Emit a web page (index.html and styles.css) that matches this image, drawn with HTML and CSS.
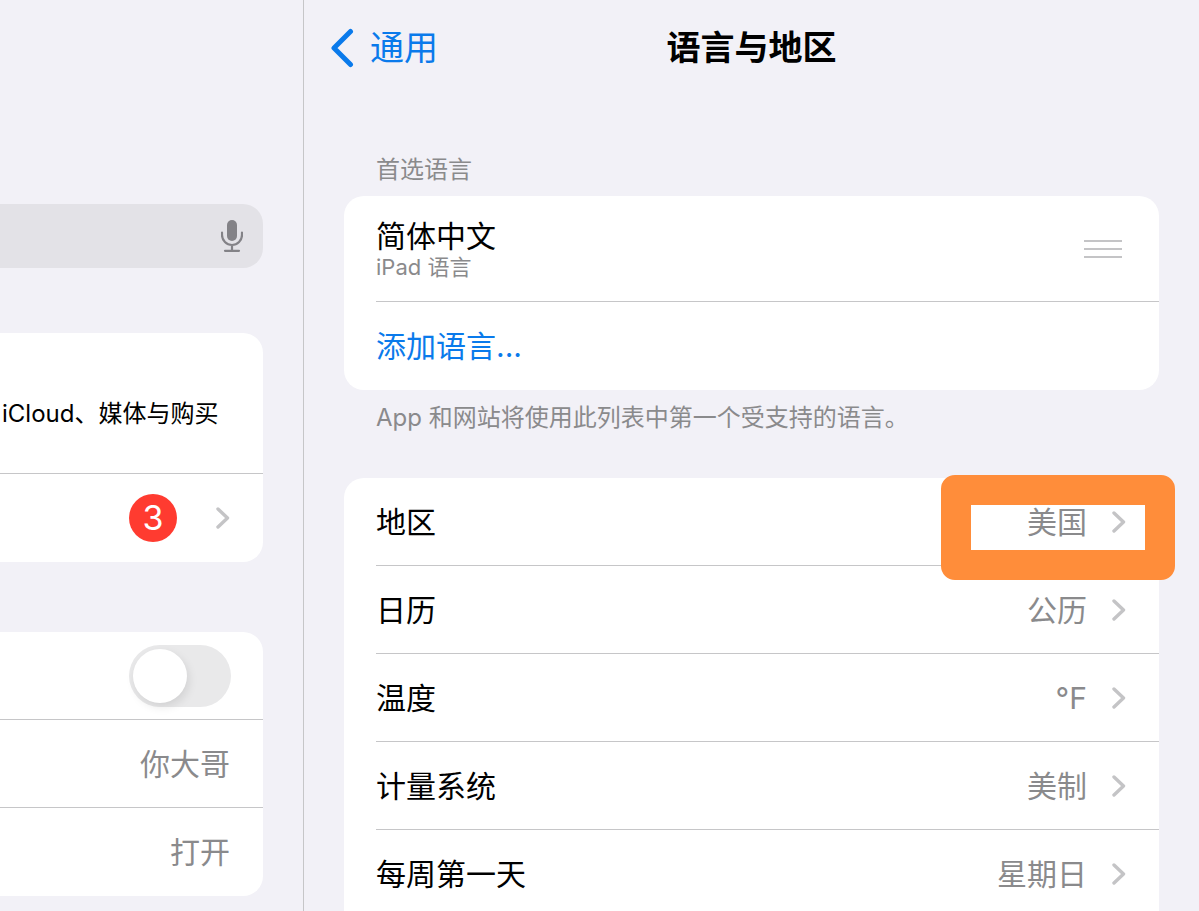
FILE: index.html
```html
<!DOCTYPE html>
<html lang="zh-CN">
<head>
  <meta charset="utf-8" />
  <meta name="viewport" content="width=device-width,initial-scale=1" />
  <title>语言与地区</title>
  <link rel="stylesheet" href="styles.css">
</head>

<body>
  <svg width="0" height="0" class="defs" aria-hidden="true">
    <symbol id="chevron" viewBox="0 0 14 22">
      <path d="M2 2 L11.500 11 L2 20" fill="none" stroke="currentColor" stroke-width="3.400" stroke-linecap="round" stroke-linejoin="round"/>
    </symbol>
  </svg>

  <aside>
    <div class="search">
      <input type="search" aria-label="搜索">
      <button class="mic" aria-label="听写">
        <svg width="22" height="32" viewBox="0 0 22 32">
          <rect x="6" y="0" width="10" height="21" rx="5" fill="currentColor"/>
          <path d="M1 12.500v2.500a10 10 0 0 0 20 0V12.500M11 25v5M4 30.800h14" fill="none" stroke="currentColor" stroke-width="2.200" stroke-linecap="round"/>
        </svg>
      </button>
    </div>

    <div class="side-card">
      <a href="#account" class="side-row account">iCloud、媒体与购买</a>
      <a href="#updates" class="side-row">
        <span class="badge">3</span>
        <svg class="chevron"><use href="#chevron"/></svg>
      </a>
    </div>

    <div class="side-card">
      <div class="side-row"><input type="checkbox" class="switch" aria-label="飞行模式"></div>
      <a href="#wifi" class="side-row">你大哥</a>
      <a href="#bluetooth" class="side-row">打开</a>
    </div>
  </aside>

  <main>
    <header>
      <a href="#general" class="back">
        <svg width="24" height="40" viewBox="0 0 24 40">
          <path d="M20.500 3.500 L4 20 L20.500 36.500" fill="none" stroke="currentColor" stroke-width="5" stroke-linecap="round" stroke-linejoin="round"/>
        </svg>
        通用
      </a>
      <h1>语言与地区</h1>
    </header>

    <section>
      <h2>首选语言</h2>
      <div class="card">
        <div class="row language">
          <div class="label">
            <div class="name">简体中文</div>
            <div class="sub">iPad 语言</div>
          </div>
          <button class="grip" aria-label="重新排序"><i></i><i></i><i></i></button>
        </div>
        <button class="row add">添加语言...</button>
      </div>
      <p class="note">App 和网站将使用此列表中第一个受支持的语言。</p>
    </section>

    <section>
      <div class="card options">
        <a href="#region" class="row">
          地区 <span class="value">美国</span>
          <svg class="chevron"><use href="#chevron"/></svg>
        </a>
        <a href="#calendar" class="row">
          日历 <span class="value">公历</span>
          <svg class="chevron"><use href="#chevron"/></svg>
        </a>
        <a href="#temperature" class="row">
          温度 <span class="value">°F</span>
          <svg class="chevron"><use href="#chevron"/></svg>
        </a>
        <a href="#units" class="row">
          计量系统 <span class="value">美制</span>
          <svg class="chevron"><use href="#chevron"/></svg>
        </a>
        <a href="#weekday" class="row">
          每周第一天 <span class="value">星期日</span>
          <svg class="chevron"><use href="#chevron"/></svg>
        </a>
        <div class="marker"></div>
      </div>
    </section>
  </main>
</body>
</html>
```
FILE: styles.css
```css
:root{
  --bg:#f2f1f7;
  --card:#ffffff;
  --line:#c6c6c8;
  --text:#000000;
  --muted:#8a8a8c;
  --accent:#0a7aeb;
  --chevron:#c4c4c6;
  --radius:20px;
  --row:88px;
}

*{ box-sizing:border-box; }

body{
  margin:0; display:flex; height:100vh; overflow:hidden;
  font-family:Inter,"Noto Sans CJK SC",sans-serif;
  font-size:30px; line-height:40px;
  background:var(--bg); color:var(--text);
}

a{ color:inherit; text-decoration:none; }
button{ padding:0; border:0; background:none; font:inherit; color:inherit; cursor:pointer; }
svg{ display:block; flex:none; }
.defs{ position:absolute; }
.chevron{ width:14px; height:22px; color:var(--chevron); }

/* sidebar */
aside{
  flex:none; width:304px; padding:204px 40px 0 0;
  border-right:1px solid var(--line);
}

.search{
  display:flex; align-items:center; height:64px; padding-right:20px;
  background:#e3e2e7; border-radius:0 var(--radius) var(--radius) 0;
}
.search input{
  flex:1; min-width:0; height:100%; border:0; outline:0;
  background:none; font:inherit; appearance:none;
}
.mic{ color:#838287; }

.side-card{
  margin-top:65px; overflow:hidden;
  background:var(--card); border-radius:0 var(--radius) var(--radius) 0;
}
.side-card + .side-card{ margin-top:70px; }
.side-row{
  display:flex; align-items:center; justify-content:flex-end;
  height:var(--row); padding-right:33px;
  color:var(--muted); border-bottom:1px solid var(--line);
}
.side-row:has(.switch){ padding-right:32px; }
.side-row:last-child{ border-bottom:0; }
.side-row.account{
  justify-content:flex-start; height:141px; padding:22px 0 0 2px;
  font-size:24px; color:var(--text); white-space:nowrap;
}

.badge{
  width:48px; height:48px; margin-right:39px; border-radius:50%;
  background:#ff3b30; color:#fff; font-size:34px; line-height:48px; text-align:center;
}

.switch{
  appearance:none; display:flex; align-items:center;
  width:102px; height:62px; margin:0; padding:4px;
  background:#e9e9ea; border-radius:31px; cursor:pointer;
}
.switch::before{
  content:""; width:54px; height:54px; border-radius:50%;
  background:#fff; box-shadow:2px 4px 10px rgba(0,0,0,0.1);
}
.switch:checked{ justify-content:flex-end; background:#34c759; }

/* detail pane */
main{ flex:1; min-width:0; padding:0 40px; overflow-y:auto; scrollbar-width:none; }

header{
  display:grid; grid-template-columns:1fr auto 1fr; align-items:center;
  height:96px; margin:0 -14px; font-size:34px;
}
.back{ display:flex; align-items:center; gap:16px; color:var(--accent); }
h1{ margin:0; font-size:34px; font-weight:600; }

section{ margin-bottom:44px; }
h2{
  margin:0; padding:58px 32px 10px;
  font-size:24px; line-height:32px; font-weight:400; color:var(--muted);
}
.note{ margin:0; padding:12px 32px 0; font-size:24px; line-height:32px; color:var(--muted); }

.card{ position:relative; padding-left:32px; background:var(--card); border-radius:var(--radius); }
.card.options{ padding-bottom:var(--row); }
.row{
  display:flex; align-items:center; width:100%;
  height:var(--row); padding:0 33px 0 0; border-bottom:1px solid var(--line);
}
.row:last-child{ border-bottom:0; }
.row.language{ height:106px; justify-content:space-between; }
.row.add{ color:var(--accent); }
.label{ padding-bottom:4px; }
.sub{ font-size:22px; line-height:22px; color:var(--muted); }
.value{ margin:0 25px 0 auto; color:var(--muted); }

.grip{ display:grid; gap:6px; width:38px; margin-right:4px; cursor:grab; }
.grip i{ height:2px; background:var(--chevron); }

/* callout around the region value */
.marker{
  position:absolute; top:-3px; right:-16px; width:234px; height:105px;
  border:30px solid #ff8d3a; border-radius:14px; pointer-events:none;
}
```
